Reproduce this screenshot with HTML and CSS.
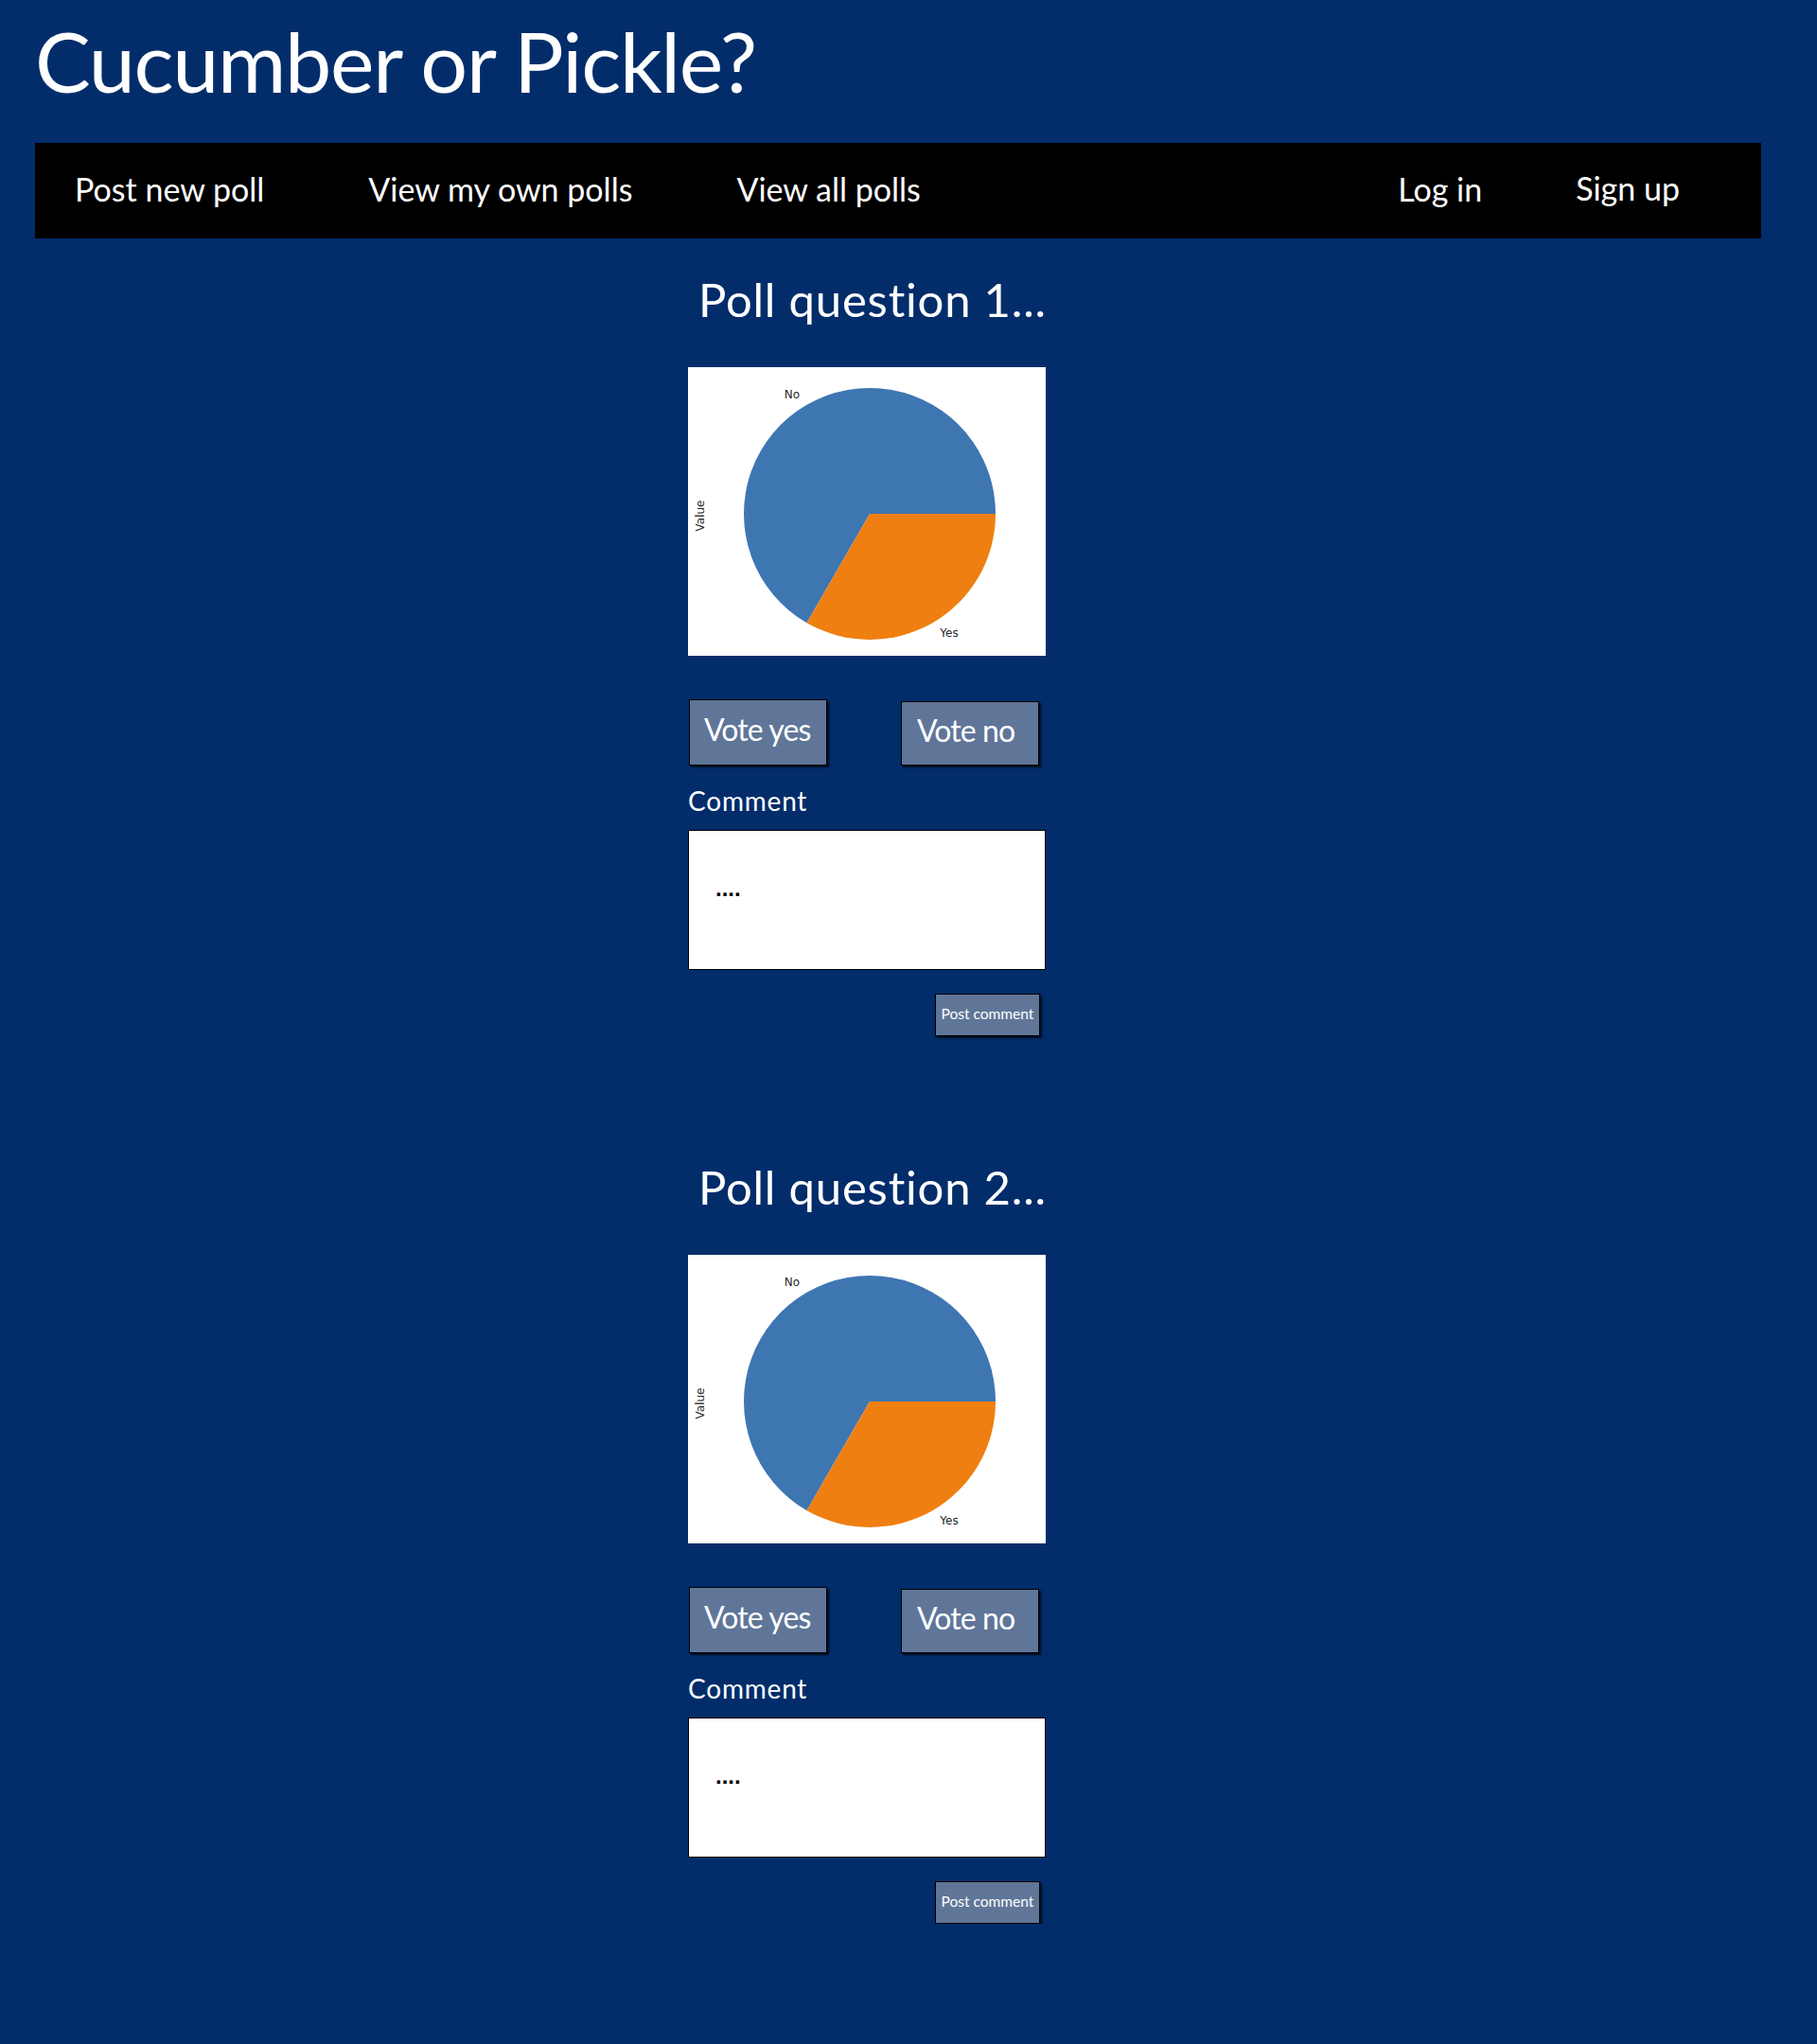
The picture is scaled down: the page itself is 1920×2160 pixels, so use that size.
FILE: index.html
```html
<!DOCTYPE html>
<html lang="en">
<head>
<meta charset="utf-8">
<title>Cucumber or Pickle?</title>
<link rel="stylesheet" href="styles.css">
</head>
<body>
<header class="site-header">
  <h1 class="site-title">Cucumber or Pickle?</h1>
  <nav class="main-nav">
    <div class="nav-group">
      <a class="nav-link" href="#">Post new poll</a>
      <a class="nav-link" href="#">View my own polls</a>
      <a class="nav-link" href="#">View all polls</a>
    </div>
    <div class="nav-group nav-account">
      <a class="nav-link" href="#">Log in</a>
      <a class="nav-link nav-signup" href="#">Sign up</a>
    </div>
  </nav>
</header>

<main class="feed">
  <section class="poll">
    <h2 class="poll-title">Poll question 1...</h2>
    <svg class="poll-chart" viewBox="0 0 378 305" width="378" height="305">
      <rect x="0" y="0" width="378" height="305" fill="#ffffff"/>
      <path d="M192 155 L125.5 270.18 A133 133 0 1 1 325 155 Z" fill="#3e76b2"/>
      <path d="M192 155 L325 155 A133 133 0 0 1 125.5 270.18 Z" fill="#ef7f11"/>
      <text class="chart-label" x="110" y="33" text-anchor="middle">No</text>
      <text class="chart-label" x="276" y="285" text-anchor="middle">Yes</text>
      <text class="chart-label" x="0" y="0" text-anchor="middle" transform="translate(17 157) rotate(-90)">Value</text>
    </svg>
    <div class="vote-row">
      <button class="btn vote-btn vote-yes" type="button">Vote yes</button>
      <button class="btn vote-btn vote-no" type="button">Vote no</button>
    </div>
    <label class="comment-label" for="c1">Comment</label>
    <textarea class="comment-box" id="c1">....</textarea>
    <div class="comment-actions">
      <button class="btn post-btn" type="button">Post comment</button>
    </div>
  </section>

  <section class="poll">
    <h2 class="poll-title">Poll question 2...</h2>
    <svg class="poll-chart" viewBox="0 0 378 305" width="378" height="305">
      <rect x="0" y="0" width="378" height="305" fill="#ffffff"/>
      <path d="M192 155 L125.5 270.18 A133 133 0 1 1 325 155 Z" fill="#3e76b2"/>
      <path d="M192 155 L325 155 A133 133 0 0 1 125.5 270.18 Z" fill="#ef7f11"/>
      <text class="chart-label" x="110" y="33" text-anchor="middle">No</text>
      <text class="chart-label" x="276" y="285" text-anchor="middle">Yes</text>
      <text class="chart-label" x="0" y="0" text-anchor="middle" transform="translate(17 157) rotate(-90)">Value</text>
    </svg>
    <div class="vote-row">
      <button class="btn vote-btn vote-yes" type="button">Vote yes</button>
      <button class="btn vote-btn vote-no" type="button">Vote no</button>
    </div>
    <label class="comment-label" for="c2">Comment</label>
    <textarea class="comment-box" id="c2">....</textarea>
    <div class="comment-actions">
      <button class="btn post-btn" type="button">Post comment</button>
    </div>
  </section>
</main>
</body>
</html>
```

FILE: styles.css
```css
html {
  background: #022d6a;
}

body {
  margin: 0;
  background: #022d6a;
  color: #ffffff;
  font-family: Lato, "Open Sans", "Noto Sans", sans-serif;
  font-variant-ligatures: none;
}

.site-header {
  padding: 20px 59px 0 37px;
}

.site-title {
  margin: 0;
  font-size: 88px;
  line-height: 88px;
  font-weight: 400;
  letter-spacing: -1.3px;
}

.main-nav {
  margin-top: 43px;
  height: 101px;
  box-sizing: border-box;
  background: #000000;
  display: flex;
  justify-content: space-between;
  align-items: flex-start;
  padding: 32px 86px 0 42px;
}

.nav-group {
  display: flex;
  gap: 110px;
}

.nav-account {
  gap: 99px;
}

.nav-link {
  color: #ffffff;
  text-decoration: none;
  font-size: 34px;
  line-height: 34px;
}

.nav-signup {
  margin-top: -1px;
}

.feed {
  display: flex;
  flex-direction: column;
  align-items: center;
  padding: 40px 88px 0 0;
  gap: 135px;
}

.poll {
  width: 378px;
  display: flex;
  flex-direction: column;
}

.poll-title {
  margin: 0 0 0 11px;
  font-size: 49px;
  line-height: 49px;
  font-weight: 400;
  letter-spacing: 0.8px;
  white-space: nowrap;
}

.poll-chart {
  display: block;
  margin-top: 47px;
  width: 378px;
  height: 305px;
}

.chart-label {
  font-family: "DejaVu Sans", sans-serif;
  font-size: 12px;
  fill: #262626;
}

.vote-row {
  margin-top: 46px;
  display: flex;
  justify-content: space-between;
  align-items: flex-start;
  padding: 0 7px 0 1px;
}

.btn {
  background: #5f7699;
  color: #ffffff;
  border: 1px solid #000000;
  box-shadow: 2px 2px 2px rgba(0, 0, 0, 0.75);
  font-family: Lato, "Open Sans", sans-serif;
  font-variant-ligatures: none;
  box-sizing: border-box;
  margin: 0;
  cursor: pointer;
}

.vote-btn {
  width: 146px;
  font-size: 32px;
  line-height: 32px;
  text-align: left;
  padding: 0 0 7px 15px;
  letter-spacing: -0.9px;
}

.vote-yes {
  height: 70px;
}

.vote-no {
  height: 68px;
  margin-top: 2px;
  padding-left: 16px;
}

.comment-label {
  margin-top: 23px;
  font-size: 28px;
  line-height: 28px;
  letter-spacing: 0.8px;
}

.comment-box {
  display: block;
  margin-top: 17px;
  width: 378px;
  height: 148px;
  box-sizing: border-box;
  border: 1px solid #000000;
  background: #ffffff;
  color: #000000;
  resize: none;
  overflow: hidden;
  font-family: "Liberation Sans", Arial, sans-serif;
  font-weight: 700;
  font-size: 24px;
  line-height: 28px;
  padding: 47px 10px 0 28px;
  outline: none;
}

.comment-actions {
  display: flex;
  justify-content: flex-end;
  padding-right: 6px;
  margin-top: 25px;
}

.post-btn {
  width: 111px;
  height: 45px;
  font-size: 15.5px;
  line-height: 16px;
  padding: 0 0 3px 0;
  text-align: center;
  white-space: nowrap;
}
```
